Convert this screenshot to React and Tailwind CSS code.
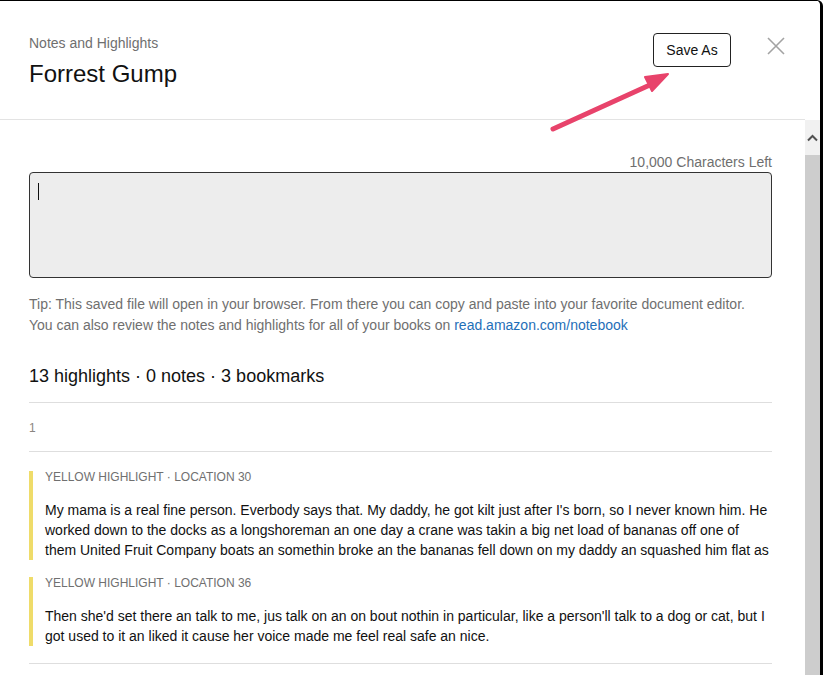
import React from "react";

const highlights = [
  {
    location: 30,
    text: "My mama is a real fine person. Everbody says that. My daddy, he got kilt just after I's born, so I never known him. He worked down to the docks as a longshoreman an one day a crane was takin a big net load of bananas off one of them United Fruit Company boats an somethin broke an the bananas fell down on my daddy an squashed him flat as",
  },
  {
    location: 36,
    text: "Then she'd set there an talk to me, jus talk on an on bout nothin in particular, like a person'll talk to a dog or cat, but I got used to it an liked it cause her voice made me feel real safe an nice.",
  },
];

const NotesModal = () => {
  return (
    <div
      className="relative flex w-[823px] h-[675px] overflow-hidden bg-white border-t border-r-[3px] border-black rounded-tr-md text-[#111]"
      style={{ fontFamily: '"Liberation Sans", Arial, sans-serif' }}
    >
      {/* LEFT COLUMN */}
      <div className="flex flex-col w-[805px] shrink-0">
        {/* HEADER */}
        <div className="flex justify-between items-start h-[119px] shrink-0 border-b border-[#e3e3e3] pl-[29px] pr-[20px] pt-[32px]">
          <div>
            <p className="text-[14px] leading-[20px] text-[#6f6f6f]">Notes and Highlights</p>
            <h1 className="mt-[7px] text-[24px] leading-[28px] text-[#111]">Forrest Gump</h1>
          </div>
          <div className="flex items-start gap-[36px]">
            <button className="w-[78px] h-[34px] border border-[#222] rounded-[4px] bg-white text-[14px] text-[#111]">
              Save As
            </button>
            <svg width="18" height="18" viewBox="0 0 18 18" className="mt-[4px]">
              <path d="M1 1 L17 17 M17 1 L1 17" stroke="#a3a3a3" strokeWidth="1.6" fill="none" />
            </svg>
          </div>
        </div>

        {/* BODY */}
        <div className="flex-1 overflow-hidden pl-[29px] pr-[33px] pt-[33px]">
          <p className="text-right text-[14px] leading-[18px] text-[#6f6f6f] mb-px">
            10,000 Characters Left
          </p>
          <div className="h-[106px] border border-[#333] rounded-[4px] bg-[#ededed] pl-[8px] pt-[10px]">
            <span className="block w-px h-[17px] bg-[#111]" />
          </div>

          <div className="mt-[16px] text-[14px] leading-[21px] text-[#6f6f6f]">
            <p>
              Tip: This saved file will open in your browser. From there you can copy and paste into your
              favorite document editor.
            </p>
            <p>
              You can also review the notes and highlights for all of your books on{" "}
              <span className="text-[#1f6fb8]">read.amazon.com/notebook</span>
            </p>
          </div>

          <h2 className="mt-[28px] text-[18px] leading-[24px] text-[#111]">
            13 highlights · 0 notes · 3 bookmarks
          </h2>

          <div className="mt-[14px] border-t border-[#dedede]" />
          <div className="h-[48px] flex items-center pt-px text-[12px] text-[#8a8580]">1</div>
          <div className="border-t border-[#dedede] pt-[19px]">
            {highlights.map((h) => (
              <div key={h.location} className="mb-[17px]">
                <div className="border-l-4 border-[#efdc6a] pl-3">
                  <p className="text-[12px] leading-[13px] uppercase text-[#707070]">
                    Yellow highlight · Location {h.location}
                  </p>
                  <p className="mt-4 text-[14px] leading-[20px] text-[#111]">{h.text}</p>
                </div>
              </div>
            ))}
            <div className="border-t border-[#dedede]" />
          </div>
        </div>
      </div>

      {/* RIGHT COLUMN / SCROLLBAR */}
      <div className="flex flex-col w-[15px] shrink-0">
        <div className="h-[119px] bg-white" />
        <div className="h-[35px] bg-[#f1f1f1] flex items-center justify-center">
          <svg width="11" height="8" viewBox="0 0 11 8">
            <path d="M1 6.5 L5.5 2 L10 6.5" stroke="#505050" strokeWidth="2" fill="none" />
          </svg>
        </div>
        <div className="flex-1 bg-[#cdcdcd]" />
      </div>

      {/* ANNOTATION ARROW */}
      <svg
        className="absolute left-[540px] top-[60px] pointer-events-none"
        width="140"
        height="80"
        viewBox="0 0 140 80"
      >
        <path d="M13 68 L112 23" stroke="#e8436b" strokeWidth="5" strokeLinecap="round" fill="none" />
        <path d="M128 13 L105 16 L112 30 Z" fill="#e8436b" stroke="#e8436b" strokeWidth="2" strokeLinejoin="round" />
      </svg>
    </div>
  );
};

export default function App() {
  return <NotesModal />;
}
